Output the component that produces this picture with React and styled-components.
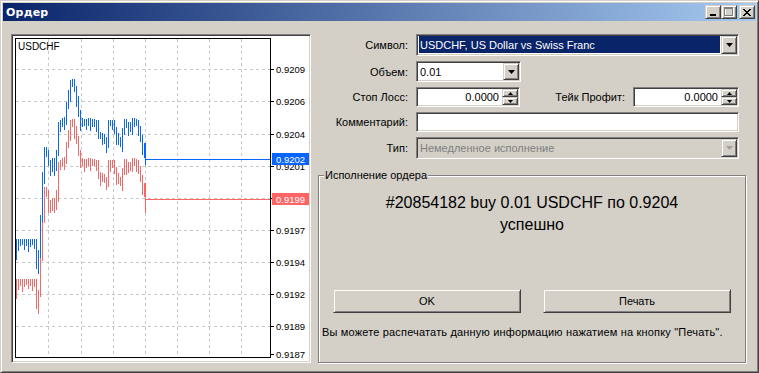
import React from "react";
import styled, { createGlobalStyle, css } from "styled-components";

const GlobalStyle = createGlobalStyle`
  html, body {
    margin: 0;
    padding: 0;
    background: #d4d0c8;
  }
  body {
    font-family: "Liberation Sans", Arial, sans-serif;
    font-size: 11px;
    color: #000;
  }
`;

// classic 3d edges
const sunken = css`
  border: 1px solid;
  border-color: #808080 #fff #fff #808080;
  box-shadow: inset 1px 1px 0 #404040, inset -1px -1px 0 #d4d0c8;
`;

const raised = css`
  border: 1px solid;
  border-color: #d4d0c8 #404040 #404040 #d4d0c8;
  box-shadow: inset 1px 1px 0 #fff, inset -1px -1px 0 #808080;
`;

const Window = styled.div`
  width: 759px;
  height: 373px;
  box-sizing: border-box;
  ${raised}
  padding: 2px;
  display: flex;
  flex-direction: column;
  background: #d4d0c8;
`;

const TitleBar = styled.div`
  height: 18px;
  flex-shrink: 0;
  display: flex;
  align-items: center;
  padding: 0 1px 0 3px;
  background: linear-gradient(to right, #0a246a, #a6caf0);
`;

const Title = styled.div`
  flex: 1;
  color: #fff;
  font-family: "DejaVu Sans", "Liberation Sans", sans-serif;
  font-weight: bold;
  font-size: 11px;
  letter-spacing: 0.2px;
`;

const WinButton = styled.div`
  box-sizing: border-box;
  width: 16px;
  height: 14px;
  ${raised}
  background: #d4d0c8;
  display: flex;
  align-items: center;
  justify-content: center;
  margin-left: ${(p) => p.$gap || 0}px;
`;

const Body = styled.div`
  flex: 1;
  display: flex;
  gap: 7px;
  padding: 13px 10px 7px 8px;
`;

const ChartFrame = styled.div`
  box-sizing: border-box;
  width: 300px;
  height: 329px;
  ${sunken}
  padding: 1px;
  background: #fff;
  flex-shrink: 0;
  svg {
    display: block;
  }
`;

const Panel = styled.div`
  flex: 1;
  display: flex;
  flex-direction: column;
`;

const Form = styled.div`
  display: grid;
  grid-template-columns: 90px 1fr;
  grid-template-rows: 22px 21px 20px 20px 22px;
  column-gap: 8px;
  row-gap: 5px;
  padding-right: 7px;
`;

const Label = styled.div`
  display: flex;
  align-items: center;
  justify-content: flex-end;
  white-space: nowrap;
  flex: ${(p) => (p.$grow ? 1 : "none")};
`;

const Line = styled.div`
  display: flex;
  align-items: stretch;
  gap: 8px;
`;

const Field = styled.div`
  box-sizing: border-box;
  ${sunken}
  padding: 1px;
  width: ${(p) => (p.$w ? `${p.$w}px` : "auto")};
  flex: ${(p) => (p.$w ? "none" : 1)};
  background: ${(p) => (p.$disabled ? "#d4d0c8" : "#fff")};
  display: flex;
  align-items: stretch;
`;

const FieldText = styled.div`
  flex: 1;
  display: flex;
  align-items: center;
  justify-content: ${(p) => (p.$right ? "flex-end" : "flex-start")};
  padding: ${(p) => (p.$right ? "0 3px 0 0" : "0 0 0 2px")};
  white-space: nowrap;
  overflow: hidden;
  color: ${(p) => (p.$disabled ? "#808080" : "#000")};
  ${(p) =>
    p.$selected &&
    css`
      background: #0a246a;
      color: #fff;
      margin: 0 1px 1px 1px;
      padding-left: 1px;
    `}
`;

const DropButton = styled.div`
  box-sizing: border-box;
  width: 16px;
  ${raised}
  background: #d4d0c8;
  display: flex;
  align-items: center;
  justify-content: center;
`;

const SpinCol = styled.div`
  width: 16px;
  display: flex;
  flex-direction: column;
`;

const SpinButton = styled.div`
  flex: 1;
  box-sizing: border-box;
  ${raised}
  background: #d4d0c8;
  display: flex;
  align-items: center;
  justify-content: center;
`;

const GroupBox = styled.div`
  position: relative;
  flex: 1;
  margin-top: 16px;
  border: 1px solid #808080;
  box-shadow: inset 1px 1px 0 #fff, 1px 1px 0 #fff;
  display: flex;
  flex-direction: column;
  padding-top: 16px;
`;

const Legend = styled.span`
  position: absolute;
  top: -7px;
  left: 5px;
  padding: 0 1px;
  line-height: 13px;
  background: #d4d0c8;
`;

const Message = styled.div`
  font-size: 16px;
  line-height: 22px;
  text-align: center;
`;

const ButtonRow = styled.div`
  display: flex;
  justify-content: center;
  gap: 22px;
  margin-top: 53px;
`;

const Button = styled.div`
  box-sizing: border-box;
  width: 188px;
  height: 24px;
  ${raised}
  background: #d4d0c8;
  display: flex;
  align-items: center;
  justify-content: center;
`;

const Info = styled.div`
  margin-top: 12px;
  padding-left: 3px;
  line-height: 14px;
  letter-spacing: 0.17px;
  white-space: nowrap;
`;

const Arrow = ({ up, small, color = "#000" }) => {
  const w = small ? 5 : 7;
  const h = small ? 3 : 4;
  const pts = up ? `0,${h} ${w},${h} ${w / 2},0` : `0,0 ${w},0 ${w / 2},${h}`;
  return (
    <svg width={w} height={h} viewBox={`0 0 ${w} ${h}`}>
      <polygon points={pts} fill={color} />
    </svg>
  );
};

const Combo = ({ text, w, selected, disabled }) => (
  <Field $w={w} $disabled={disabled}>
    <FieldText $selected={selected} $disabled={disabled}>
      {text}
    </FieldText>
    <DropButton>
      <Arrow color={disabled ? "#a0a0a0" : "#000"} />
    </DropButton>
  </Field>
);

const Spin = ({ value, w }) => (
  <Field $w={w}>
    <FieldText $right>{value}</FieldText>
    <SpinCol>
      <SpinButton>
        <Arrow up small />
      </SpinButton>
      <SpinButton>
        <Arrow small />
      </SpinButton>
    </SpinCol>
  </Field>
);

// chart data: tops of the ask bars, bid is drawn 40px lower
const BLUE = "#0a64ff";
const RED = "#ff6464";
const KEYS = [
  [16, 239], [36, 239], [38, 262], [40, 250], [42, 215], [44, 172],
  [46, 147], [48, 150], [50, 160], [52, 165], [54, 158], [56, 163],
  [58, 150], [60, 122], [62, 120], [64, 118], [66, 117], [68, 102],
  [70, 90], [72, 80], [74, 79], [76, 86], [78, 96], [80, 110],
  [82, 118], [86, 120], [90, 118], [98, 120], [100, 132], [104, 134],
  [108, 140], [110, 120], [114, 120], [118, 133], [122, 140], [124, 128],
  [126, 119], [130, 125], [134, 118], [138, 120], [140, 126], [142, 135],
  [144, 143], [146, 150],
];
const LENS = [7, 12, 7, 6, 11, 7, 13, 8, 6, 10, 7, 12, 8];

function topAt(x) {
  if (x <= KEYS[0][0]) return KEYS[0][1];
  for (let i = 1; i < KEYS.length; i++) {
    const [x1, y1] = KEYS[i];
    const [x0, y0] = KEYS[i - 1];
    if (x <= x1) return y0 + ((y1 - y0) * (x - x0)) / (x1 - x0);
  }
  return KEYS[KEYS.length - 1][1];
}

function barsPath(offset, shift) {
  let d = "";
  for (let x = 16; x <= 144; x += 2) {
    const a = topAt(x);
    const b = topAt(x + 2);
    const len = LENS[((x - 16) / 2 + shift) % LENS.length];
    let y2 = Math.max(a, b) + len;
    if (x === 16) y2 += 14;
    d += `M${x + 0.5} ${Math.round(Math.min(a, b)) + offset}V${Math.round(y2) + offset}`;
  }
  return d;
}

const GRID_X = [48, 81, 113, 145, 177, 209, 241];
const LEVELS = [
  [69, "0.9209"], [101, "0.9206"], [134, "0.9204"], [166, "0.9201"],
  [198, ""], [230, "0.9197"], [262, "0.9194"], [294, "0.9192"], [326, "0.9189"],
];

const Chart = () => (
  <svg width="296" height="325" viewBox="13 36 296 325" fontFamily="Liberation Sans, Arial, sans-serif">
    {GRID_X.map((x) => (
      <line key={x} x1={x + 0.5} x2={x + 0.5} y1={39} y2={357} stroke="#c8c8c8" strokeDasharray="3 3" />
    ))}
    {LEVELS.map(([y]) => (
      <line key={y} x1={16} x2={270} y1={y + 0.5} y2={y + 0.5} stroke="#c8c8c8" strokeDasharray="3 3" />
    ))}
    <path d={barsPath(40, 3)} stroke={RED} />
    <path d={barsPath(0, 0)} stroke={BLUE} />
    <path d="M145.5 183V213" stroke={RED} />
    <path d="M145.5 143V165" stroke={BLUE} />
    <line x1={146} x2={271} y1={159.5} y2={159.5} stroke={BLUE} />
    <line x1={146} x2={271} y1={199.5} y2={199.5} stroke={RED} />
    <rect x={15.5} y={38.5} width={255} height={319} fill="none" stroke="#000" />
    {LEVELS.map(([y, t]) => (
      <g key={"t" + y}>
        <line x1={270} x2={274} y1={y + 0.5} y2={y + 0.5} stroke="#000" />
        {t && (
          <text x={276} y={y + 4} fontSize="9.5" fill="#000">
            {t}
          </text>
        )}
      </g>
    ))}
    <line x1={270} x2={274} y1={354.5} y2={354.5} stroke="#000" />
    <text x={276} y={358} fontSize="9.5" fill="#000">0.9187</text>
    <rect x={272} y={153} width={37} height={12} fill={BLUE} />
    <text x={276} y={163} fontSize="9.5" fill="#fff">0.9202</text>
    <rect x={272} y={193} width={37} height={12} fill={RED} />
    <text x={276} y={203} fontSize="9.5" fill="#fff">0.9199</text>
    <text x={18} y={50} fontSize="10" fill="#000">USDCHF</text>
  </svg>
);

export default function App() {
  return (
    <>
      <GlobalStyle />
      <Window>
        <TitleBar>
          <Title>Ордер</Title>
          <WinButton>
            <svg width="8" height="9" viewBox="0 0 8 9">
              <rect x="1" y="6" width="6" height="2" fill="#000" />
            </svg>
          </WinButton>
          <WinButton>
            <svg width="10" height="10" viewBox="0 0 10 10">
              <rect x="1.5" y="1.5" width="8" height="8" fill="none" stroke="#fff" />
              <rect x="0.5" y="0.5" width="8" height="8" fill="none" stroke="#808080" />
              <rect x="1" y="1" width="7" height="1" fill="#808080" />
            </svg>
          </WinButton>
          <WinButton $gap={2}>
            <svg width="8" height="7" viewBox="0 0 8 7">
              <path d="M0 0L7 7M1 0L8 7M7 0L0 7M8 0L1 7" stroke="#000" strokeWidth="1" />
            </svg>
          </WinButton>
        </TitleBar>
        <Body>
          <ChartFrame>
            <Chart />
          </ChartFrame>
          <Panel>
            <Form>
              <Label>Символ:</Label>
              <Combo text="USDCHF, US Dollar vs Swiss Franc" selected />
              <Label>Объем:</Label>
              <Line>
                <Combo text="0.01" w={105} />
              </Line>
              <Label>Стоп Лосс:</Label>
              <Line>
                <Spin value="0.0000" w={104} />
                <Label $grow>Тейк Профит:</Label>
                <Spin value="0.0000" w={106} />
              </Line>
              <Label>Комментарий:</Label>
              <Field>
                <FieldText />
              </Field>
              <Label>Тип:</Label>
              <Combo text="Немедленное исполнение" disabled />
            </Form>
            <GroupBox>
              <Legend>Исполнение ордера</Legend>
              <Message>
                #20854182 buy 0.01 USDCHF по 0.9204
                <br />
                успешно
              </Message>
              <ButtonRow>
                <Button>OK</Button>
                <Button>Печать</Button>
              </ButtonRow>
              <Info>Вы можете распечатать данную информацию нажатием на кнопку "Печать".</Info>
            </GroupBox>
          </Panel>
        </Body>
      </Window>
    </>
  );
}
